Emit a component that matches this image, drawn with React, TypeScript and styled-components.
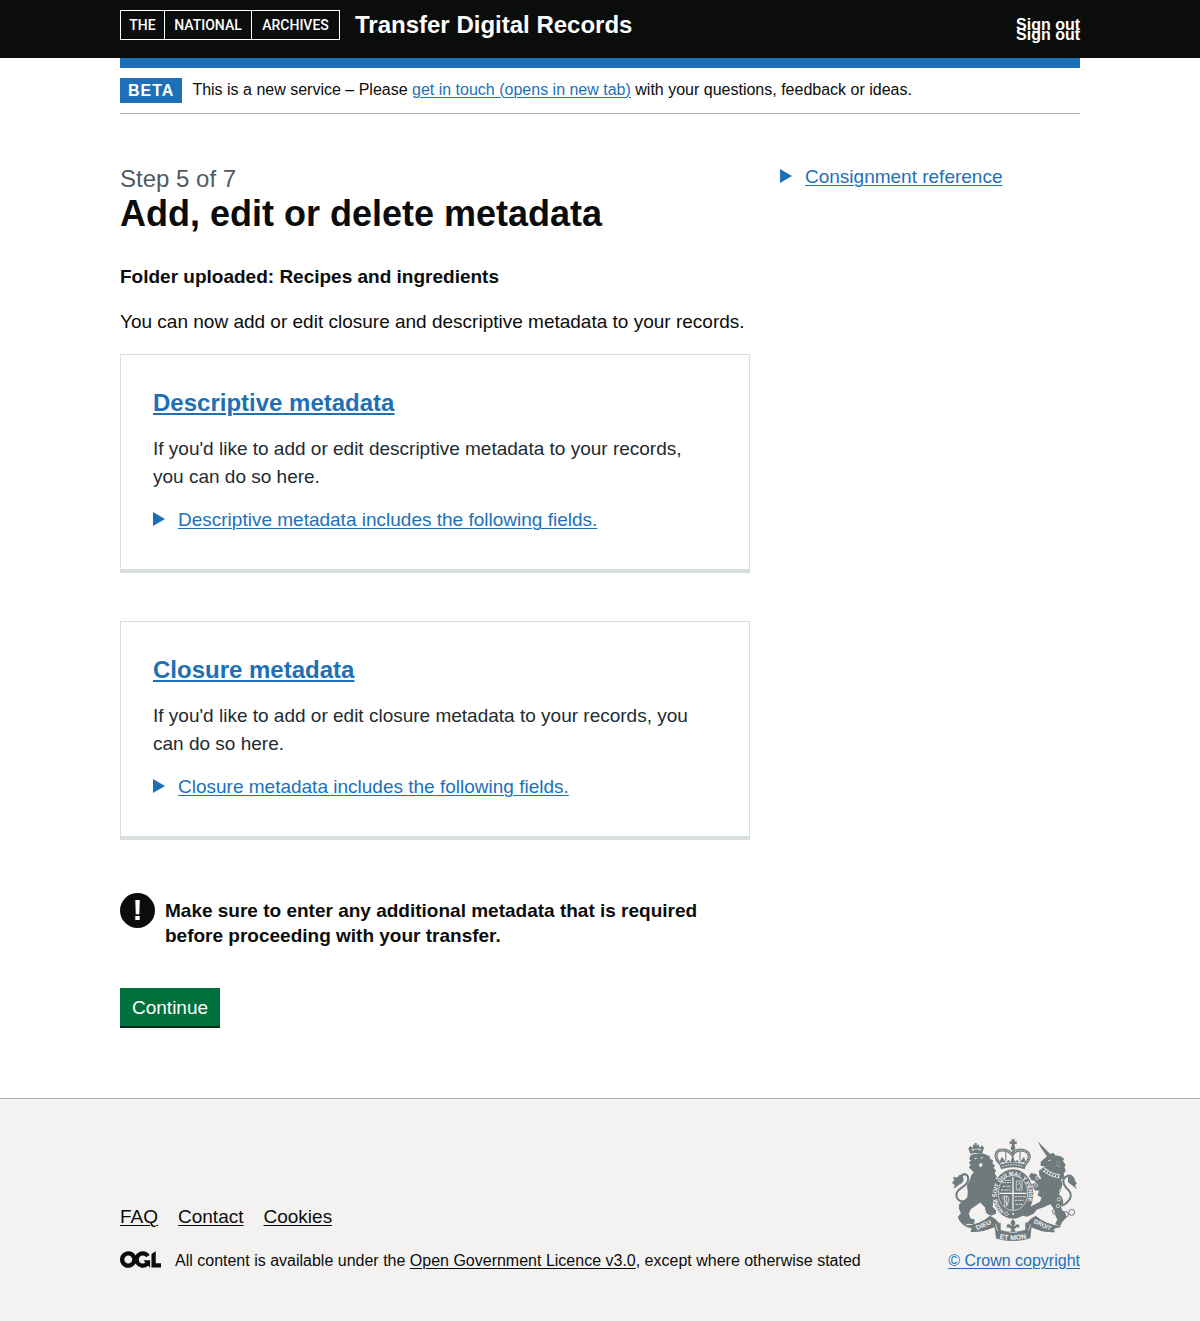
import React from "react";
import styled, { createGlobalStyle } from "styled-components";

const Global = createGlobalStyle`
  *, *::before, *::after { box-sizing: border-box; }
  body { margin: 0; background: #f3f2f1; color: #0b0c0c; font-family: "Liberation Sans", Arial, sans-serif; font-size: 19px; line-height: 25px; -webkit-font-smoothing: antialiased; }
  p, h1, h2, ul { margin: 0; padding: 0; }
  h2, h1 { font-size: inherit; }
  a { text-underline-offset: 2px; text-decoration-thickness: 1px; }
`;

const Container = styled.div`
  max-width: 960px;
  margin: 0 auto;
  @media (max-width: 1020px) { margin: 0 30px; }
`;

const Header = styled.header`
  background: #0b0c0c;
  color: #fff;
`;

const HeaderRow = styled(Container)`
  display: flex;
  align-items: flex-start;
  justify-content: space-between;
  padding: 10px 0 18px;
`;

const Brand = styled.a`
  display: flex;
  align-items: center;
  gap: 15px;
  color: #fff;
  text-decoration: none;
`;

const Logo = styled.span`
  display: grid;
  grid-template-columns: 43px 87px 88px;
  border: 1px solid #fff;
  font-family: Roboto, "Liberation Sans", sans-serif;
  font-size: 14px;
  line-height: 28px;
  font-weight: 500;
  text-align: center;
`;

const LogoWord = styled.span`
  & + & { border-left: 1px solid #fff; }
`;

const ServiceName = styled.span`
  font-size: 24px;
  line-height: 30px;
  font-weight: 700;
`;

const SignOut = styled.nav`
  display: flex;
  flex-direction: column;
  padding-top: 10px;
`;

const SignOutLink = styled.a`
  font-size: 16px;
  line-height: 10px;
  font-weight: 700;
  color: #fff;
  text-decoration: none;
`;

const BlueBar = styled.div`
  height: 10px;
  background: #1d70b8;
`;

const Page = styled.div`
  background: #fff;
`;

const PhaseBanner = styled.div`
  display: flex;
  align-items: center;
  gap: 10px;
  padding: 10px 0;
  border-bottom: 1px solid #b1b4b6;
  font-size: 16px;
`;

const Tag = styled.strong`
  padding: 0 8px;
  background: #1d70b8;
  color: #fff;
  letter-spacing: 1px;
`;

const BannerText = styled.span`
  line-height: 20px;
  margin-bottom: 2px;
`;

const Link = styled.a`
  color: #1d70b8;
`;

const Main = styled.main`
  display: grid;
  grid-template-columns: 2fr 1fr;
  margin: 0 -15px;
  padding: 50px 0 72px;
  @media (max-width: 700px) { grid-template-columns: 1fr; }
`;

const Column = styled.div`
  padding: 0 15px;
`;

const Caption = styled.span`
  display: block;
  font-size: 24px;
  line-height: 30px;
  font-weight: 400;
  color: #505a5f;
`;

const Title = styled.h1`
  font-size: 36px;
  line-height: 40px;
  font-weight: 700;
  margin-bottom: 30px;
`;

const Subtitle = styled.h2`
  font-weight: 700;
  margin-bottom: 20px;
`;

const Lead = styled.p`
  margin-bottom: 20px;
`;

const Card = styled.section`
  padding: 32px 32px 37px;
  border: 1px solid #d8dddf;
  border-bottom-width: 4px;
  margin-bottom: 48px;
`;

const CardTitle = styled.h2`
  font-size: 24px;
  line-height: 32px;
  margin-bottom: 16px;
  a { text-decoration-thickness: 2px; }
`;

const CardText = styled.p`
  color: #212b32;
  line-height: 28px;
  margin-bottom: 16px;
`;

const Details = styled.details`
  color: #1d70b8;
`;

const Summary = styled.summary`
  display: flex;
  align-items: center;
  gap: 13px;
  list-style: none;
  cursor: pointer;
  &::-webkit-details-marker { display: none; }
  &::before {
    content: "";
    margin-bottom: 2px;
    border-style: solid;
    border-color: transparent;
    border-width: 7px 0 7px 12px;
    border-left-color: #1d70b8;
  }
  span { text-decoration: underline; text-underline-offset: 2px; text-decoration-thickness: 1px; }
`;

const Warning = styled.div`
  display: flex;
  gap: 10px;
  padding-top: 5px;
  margin-bottom: 40px;
`;

const WarningIcon = styled.span`
  flex: none;
  width: 35px;
  height: 35px;
  border-radius: 50%;
  background: #0b0c0c;
  color: #fff;
  font-size: 30px;
  line-height: 34px;
  font-weight: 700;
  text-align: center;
`;

const WarningText = styled.strong`
  padding-top: 5px;
`;

const Button = styled.button`
  display: block;
  padding: 0 12px;
  height: 38px;
  border: 0;
  background: #00703c;
  box-shadow: 0 2px 0 #002d18;
  color: #fff;
  font: inherit;
  cursor: pointer;
`;

const Footer = styled.footer`
  border-top: 1px solid #b1b4b6;
  padding: 40px 0;
`;

const FooterRow = styled(Container)`
  display: flex;
  align-items: flex-end;
  justify-content: space-between;
  gap: 30px;
`;

const FooterLinks = styled.ul`
  display: flex;
  gap: 20px;
  list-style: none;
  margin-bottom: 22px;
  a { color: #0b0c0c; }
`;

const Licence = styled.div`
  display: flex;
  align-items: flex-start;
  gap: 14px;
  font-size: 16px;
  line-height: 20px;
  a { color: #0b0c0c; }
`;

const Copyright = styled.a`
  display: flex;
  flex-direction: column;
  align-items: center;
  gap: 10px;
  flex: none;
  font-size: 16px;
  line-height: 20px;
  color: #1d70b8;
`;

const INK = "#6f7a7d";
const PAPER = "#f3f2f1";

function Crest() {
  return (
    <svg width="125" height="102" viewBox="36 27 375 306" fill={INK} stroke="none" fontFamily="Liberation Sans, sans-serif" fontWeight="700" aria-hidden="true">
      <defs>
        <path id="garter" d="M192 243A48 58 0 1 1 251 237" />
        <path id="motto" d="M168 324Q218 336 270 323" />
      </defs>

      {/* lion and its crown */}
      <path d="M91 72L85 55L92 48L98 54L100 43L108 47L115 43L120 53L126 46L132 53L126 71Q108 66 91 72Z" />
      <path d="M104 39h6v8h-6z" />
      <path d="M93 61Q108 54 125 60M99 55v7M118 54v7" fill="none" stroke={PAPER} strokeWidth="2" />
      <path stroke={INK} strokeWidth="3" d="M93 76Q110 70 130 72L149 80L148 86L159 93L155 99L164 108L159 113L167 123L162 129L169 140L165 147L176 153L171 166L161 173L163 182L155 193L159 213L156 231L166 240L167 250L153 256L140 249L136 232L121 216L111 223L91 237L85 251L90 266L103 270L101 281L84 280L72 286L61 274L55 261L64 250L59 237L58 225L66 216L83 205L85 185L82 166L91 149L96 134L103 128L94 117L88 113L94 104L88 99L94 91L89 87Z" />
      <path d="M103 83l10 3-7 2zM121 83l10-2-7 6zM117 102q5-5 11 0l-4 10-5-2z" fill={PAPER} />
      <path d="M84 205C65 226 44 206 51 187C58 172 80 170 84 151C87 131 70 128 65 139" fill="none" stroke={INK} strokeWidth="6" />
      <path d="M66 134Q57 132 53 142L38 142L43 149L36 159L44 165L41 176Q57 164 67 158Q75 148 66 134Z" />

      {/* royal crown */}
      <path d="M214 28h11l-2 7 7-2v10l-7-2 2 9h-11l2-9-7 2V33l7 2z" />
      <circle cx="219" cy="55" r="7" />
      <g fill="none" stroke={INK}>
        <path d="M182 102C161 83 165 60 187 60C202 59 211 67 217 74C224 62 239 57 253 62C275 70 269 91 255 103" strokeWidth="9" />
        <path d="M182 102C161 83 165 60 187 60C202 59 211 67 217 74C224 62 239 57 253 62C275 70 269 91 255 103" stroke={PAPER} strokeWidth="3" strokeDasharray="3 4" />
        <path d="M197 64V91M240 64V91M218 61V90" strokeWidth="4" strokeDasharray="4 2" />
        <path d="M181 111Q218 98 256 111" strokeWidth="14" />
        <path d="M187 110Q218 98 250 110" stroke={PAPER} strokeWidth="3" strokeDasharray="5 3" />
      </g>
      <path d="M179 97l6-17 7 9 6 8 7-7 7 5 6-19 7 19 7-5 6 7 8-8 6-9 5 17z" />

      {/* garter around the royal arms */}
      <ellipse cx="219" cy="192" rx="61" ry="74" />
      <ellipse cx="219" cy="189" rx="44" ry="53" fill="none" stroke={PAPER} strokeWidth="2" />
      <text fontSize="17" fill={PAPER}><textPath href="#garter">HONI SOIT QUI MAL Y PENSE</textPath></text>
      <path d="M219 140V239M178 190H260" stroke={PAPER} strokeWidth="4" />
      <path d="M187 158h26m-25 11h25m-30 11h30m-19-29h18M225 200h32m-32 11h28m-26 12h20" stroke={PAPER} strokeWidth="3" strokeDasharray="6 3 3 2" />
      <path d="M229 153h17v27h-17zM234 164l5-7 5 14-9 6" fill="none" stroke={PAPER} strokeWidth="2" />
      <path d="M188 199q21-3 18 11q-2 13-9 20M187 202l18 25M194 197v34M200 197v31" fill="none" stroke={PAPER} strokeWidth="2" />
      <path d="M192 249l8-4 6 9-8 3z" fill="none" stroke={PAPER} strokeWidth="2" />
      <circle cx="219" cy="252" r="3" fill={PAPER} />

      {/* unicorn with collar and chain */}
      <path d="M293 34L331 73L322 81L302 52Z" />
      <path stroke={INK} strokeWidth="4" d="M330 74L340 71L345 78L359 80L370 87L366 93L375 105L371 110L375 122L369 130L371 141L361 148L365 163L361 179L355 193L365 204L368 218L361 231L365 242L373 247L378 261L365 275L359 286L348 281L355 267L347 254L344 237L332 220L310 230L289 237L279 250L260 258L245 254L258 238L277 229L302 216L307 202L295 195L300 181L285 179L279 163L289 160L287 151L276 149L269 139L274 131L287 134L300 150L307 145L300 136L299 123L309 116L320 107L304 106L304 97L318 84Z" />
      <path d="M324 91l9-2-5 5z" fill={PAPER} />
      <path d="M310 117Q329 135 359 139" fill="none" stroke={PAPER} strokeWidth="12" />
      <path d="M309 117Q329 135 360 139" fill="none" stroke={INK} strokeWidth="8" strokeDasharray="6 3" />
      <path d="M349 93l12 8M348 104l14 8" fill="none" stroke={PAPER} strokeWidth="1" />
      <path d="M366 227C389 216 400 197 386 181C367 163 365 147 380 139C391 132 400 142 398 150" fill="none" stroke={INK} strokeWidth="6" />
      <path d="M384 141Q401 132 405 152L411 161L405 165L410 178L399 168L384 157Z" />
      <g fill="none" stroke={INK} strokeWidth="3">
        <circle cx="344" cy="245" r="7" /><circle cx="355" cy="260" r="6" /><circle cx="377" cy="253" r="8" /><circle cx="395" cy="247" r="9" />
      </g>
      <g fill="none" stroke={PAPER} strokeWidth="2">
        <circle cx="288" cy="166" r="5" /><circle cx="292" cy="144" r="5" /><circle cx="357" cy="208" r="5" /><circle cx="354" cy="228" r="5" /><circle cx="363" cy="182" r="5" />
      </g>

      {/* motto ribbon */}
      <path stroke={INK} strokeWidth="3" d="M76 288Q119 286 150 259Q167 265 178 283L164 290Q130 306 93 305L97 295Z" />
      <path stroke={INK} strokeWidth="3" d="M361 290Q316 284 287 259Q272 265 259 283L273 290Q306 307 343 306L339 296Z" />
      <path stroke={INK} strokeWidth="2" d="M163 278Q172 286 181 279V301Q218 313 257 300V278Q266 286 275 278L270 324Q218 340 169 325Z" />
      <path d="M167 283l6 20M271 283l-6 20" fill="none" stroke={PAPER} strokeWidth="2" />
      <text fontSize="20" fill={PAPER} textAnchor="middle" transform="translate(133 291) rotate(-24)">DIEU</text>
      <text fontSize="18" fill={PAPER} textAnchor="middle" transform="translate(305 290) rotate(25)">DROIT</text>
      <text fontSize="21" fill={PAPER} textAnchor="middle"><textPath href="#motto" startOffset="50%">ET MON</textPath></text>
      <path d="M219 266Q233 280 222 288Q237 275 239 289Q238 297 229 293L224 299L230 307H208L214 299L208 293Q197 297 199 286Q206 276 216 288Q204 279 219 266Z" stroke={PAPER} strokeWidth="2" />
    </svg>
  );
}

export default function App() {
  return (
    <>
      <Global />
      <Header>
        <HeaderRow>
          <Brand href="#">
            <Logo><LogoWord>THE</LogoWord><LogoWord>NATIONAL</LogoWord><LogoWord>ARCHIVES</LogoWord></Logo>
            <ServiceName>Transfer Digital Records</ServiceName>
          </Brand>
          <SignOut>
            <SignOutLink href="#">Sign out</SignOutLink>
            <SignOutLink href="#">Sign out</SignOutLink>
          </SignOut>
        </HeaderRow>
      </Header>
      <Page>
        <Container>
          <BlueBar />
          <PhaseBanner>
            <Tag>BETA</Tag>
            <BannerText>This is a new service – Please <Link href="#">get in touch (opens in new tab)</Link> with your questions, feedback or ideas.</BannerText>
          </PhaseBanner>
          <Main>
            <Column>
              <Title><Caption>Step 5 of 7</Caption>Add, edit or delete metadata</Title>
              <Subtitle>Folder uploaded: Recipes and ingredients</Subtitle>
              <Lead>You can now add or edit closure and descriptive metadata to your records.</Lead>
              <Card>
                <CardTitle><Link href="#">Descriptive metadata</Link></CardTitle>
                <CardText>If you'd like to add or edit descriptive metadata to your records, you can do so here.</CardText>
                <Details><Summary><span>Descriptive metadata includes the following fields.</span></Summary></Details>
              </Card>
              <Card>
                <CardTitle><Link href="#">Closure metadata</Link></CardTitle>
                <CardText>If you'd like to add or edit closure metadata to your records, you can do so here.</CardText>
                <Details><Summary><span>Closure metadata includes the following fields.</span></Summary></Details>
              </Card>
              <Warning>
                <WarningIcon aria-hidden="true">!</WarningIcon>
                <WarningText>Make sure to enter any additional metadata that is required before proceeding with your transfer.</WarningText>
              </Warning>
              <Button type="button">Continue</Button>
            </Column>
            <Column as="aside">
              <Details><Summary><span>Consignment reference</span></Summary></Details>
            </Column>
          </Main>
        </Container>
      </Page>
      <Footer>
        <FooterRow>
          <div>
            <FooterLinks>
              <li><a href="#">FAQ</a></li>
              <li><a href="#">Contact</a></li>
              <li><a href="#">Cookies</a></li>
            </FooterLinks>
            <Licence>
              <svg width="41" height="17" viewBox="0 0 483.2 195.7" aria-hidden="true"><path fill="currentColor" d="M421.5 142.8V.1l-50.7 32.3v161.1h112.4v-50.7zm-122.3-9.6A47.12 47.12 0 0 1 221 97.8c0-26 21.1-47.1 47.1-47.1 16.7 0 31.4 8.7 39.7 21.8l42.7-27.2A97.63 97.63 0 0 0 268.1 0c-36.5 0-68.3 20.1-85.1 49.7A98 98 0 0 0 97.8 0C43.9 0 0 43.9 0 97.8s43.9 97.8 97.8 97.8c36.5 0 68.3-20.1 85.1-49.7a97.76 97.76 0 0 0 149.6 25.4l19.4 22.2h3v-87.8h-80l24.3 27.5zM97.8 145c-26 0-47.1-21.1-47.1-47.1s21.1-47.1 47.1-47.1 47.1 21.1 47.1 47.1S123.8 145 97.8 145" /></svg>
              <span>All content is available under the <a href="#">Open Government Licence v3.0</a>, except where otherwise stated</span>
            </Licence>
          </div>
          <Copyright href="#">
            <Crest />
            © Crown copyright
          </Copyright>
        </FooterRow>
      </Footer>
    </>
  );
}
